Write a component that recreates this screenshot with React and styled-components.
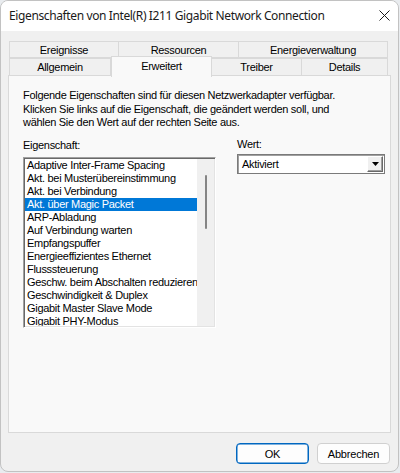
import React from "react";
import styled, { createGlobalStyle } from "styled-components";

const Global = createGlobalStyle`
  html, body { margin: 0; padding: 0; background: #e9ecef; }
  #root { width: 400px; height: 473px; }
`;

const Window = styled.div`
  width: 399px;
  height: 472px;
  box-sizing: border-box;
  background: #f0f0f0;
  border: 1px solid #c2c2c2;
  border-radius: 8px;
  overflow: hidden;
  display: flex;
  flex-direction: column;
  font-family: "Liberation Sans", Arial, sans-serif;
  font-size: 11px;
  letter-spacing: -0.3px;
  color: #000;
`;

const TitleBar = styled.div`
  height: 30px;
  flex: none;
  display: flex;
  align-items: center;
  justify-content: space-between;
  background: #ffffff;
  padding: 0 8px 1px 8px;
  box-sizing: border-box;
`;

const Title = styled.div`
  font-family: "Noto Sans", "Open Sans", sans-serif;
  font-size: 12px;
  letter-spacing: -0.38px;
  color: #1a1a1a;
`;

const CloseBtn = styled.div`
  width: 11px;
  height: 11px;
  display: flex;
  align-items: center;
  justify-content: center;
`;

const Body = styled.div`
  flex: 1;
  display: flex;
  flex-direction: column;
  padding: 10px 8px 0 7px;
`;

const TabRows = styled.div`
  display: flex;
  flex-direction: column;
  padding-left: 1px;
  position: relative;
  z-index: 2;
`;

const TabRow = styled.div`
  display: flex;
  height: ${(p) => p.$h}px;
  align-items: flex-end;
`;

const Tab = styled.div`
  box-sizing: border-box;
  width: ${(p) => p.$w}px;
  height: ${(p) => (p.$active ? p.$h + 3 : p.$h)}px;
  margin-bottom: ${(p) => (p.$active ? -1 : 0)}px;
  display: flex;
  justify-content: center;
  align-items: ${(p) => (p.$active ? "flex-start" : "center")};
  padding-top: ${(p) => (p.$active ? 3 : 0)}px;
  border: 1px solid #d9d9d9;
  border-bottom: ${(p) => (p.$active ? "none" : "1px solid #d9d9d9")};
  border-left-width: ${(p) => (p.$first || p.$active ? 1 : 0)}px;
  background: ${(p) => (p.$active ? "#f9f9f9" : "#f0f0f0")};
  position: relative;
  z-index: ${(p) => (p.$active ? 3 : 1)};
  white-space: nowrap;
`;

const Panel = styled.div`
  box-sizing: border-box;
  width: 383px;
  height: 358px;
  margin-top: -1px;
  border: 1px solid #d9d9d9;
  background: #f9f9f9;
  padding: 12px 0 0 14px;
  display: flex;
  flex-direction: column;
`;

const Desc = styled.div`
  line-height: 13.5px;
  padding-top: 1px;
`;

const Columns = styled.div`
  display: grid;
  grid-template-columns: 193px 148px;
  column-gap: 21px;
  margin-top: 9px;
`;

const Col = styled.div`
  display: flex;
  flex-direction: column;
`;

const Label = styled.div`
  line-height: 13px;
  margin-bottom: ${(p) => p.$gap}px;
  margin-top: ${(p) => p.$top || 0}px;
`;

const ListBox = styled.div`
  box-sizing: border-box;
  width: 193px;
  height: 171px;
  border-style: solid;
  border-width: 1px;
  border-color: #a0a0a0 #ffffff #ffffff #a0a0a0;
  box-shadow: inset 1px 1px 0 #696969, inset -1px -1px 0 #e3e3e3;
  background: #fff;
  padding: 1px;
  display: flex;
  overflow: hidden;
`;

const Items = styled.div`
  flex: 1;
  min-width: 0;
  overflow: hidden;
`;

const Item = styled.div`
  height: 13px;
  line-height: 13px;
  padding-left: 2px;
  white-space: nowrap;
  overflow: hidden;
  background: ${(p) => (p.$sel ? "#0078d7" : "transparent")};
  color: ${(p) => (p.$sel ? "#fff" : "#000")};
`;

const ScrollTrack = styled.div`
  width: 17px;
  flex: none;
  background: #f0f0f0;
  display: flex;
  justify-content: center;
  padding-top: 16px;
`;

const Thumb = styled.div`
  width: 2px;
  height: 54px;
  background: #858585;
  border-radius: 1px;
  margin-left: 1px;
`;

const Combo = styled.div`
  box-sizing: border-box;
  width: 148px;
  height: 20px;
  border: 1px solid #7a7a7a;
  box-shadow: inset 1px 1px 0 #a0a0a0;
  background: #fff;
  display: flex;
  align-items: stretch;
  padding: 1px;
`;

const ComboText = styled.div`
  flex: 1;
  padding-left: 3px;
  line-height: 17px;
`;

const ComboBtn = styled.div`
  box-sizing: border-box;
  width: 16px;
  background: #f0f0f0;
  border: 1px solid;
  border-color: #ffffff #696969 #696969 #ffffff;
  box-shadow: inset -1px -1px 0 #a0a0a0;
  display: flex;
  align-items: center;
  justify-content: center;
`;

const Footer = styled.div`
  display: flex;
  justify-content: flex-end;
  gap: 8px;
  padding: 10px 0 0 0;
`;

const Button = styled.button`
  box-sizing: border-box;
  width: 73px;
  height: 21px;
  font-family: "Liberation Sans", Arial, sans-serif;
  font-size: 11px;
  letter-spacing: -0.2px;
  color: #000;
  background: #fdfdfd;
  border: 1px solid ${(p) => (p.$primary ? "#0067c0" : "#d0d0d0")};
  box-shadow: ${(p) => (p.$primary ? "inset 0 0 0 0.5px #0067c0" : "none")};
  border-radius: 4px;
  padding: 0;
`;

const items = [
  "Adaptive Inter-Frame Spacing",
  "Akt. bei Musterübereinstimmung",
  "Akt. bei Verbindung",
  "Akt. über Magic Packet",
  "ARP-Abladung",
  "Auf Verbindung warten",
  "Empfangspuffer",
  "Energieeffizientes Ethernet",
  "Flusssteuerung",
  "Geschw. beim Abschalten reduzieren",
  "Geschwindigkeit & Duplex",
  "Gigabit Master Slave Mode",
  "Gigabit PHY-Modus",
];

export default function App() {
  return (
    <>
      <Global />
      <Window>
        <TitleBar>
          <Title>Eigenschaften von Intel(R) I211 Gigabit Network Connection</Title>
          <CloseBtn>
            <svg width="11" height="11" viewBox="0 0 11 11">
              <path d="M0.5 0.5 L10.5 10.5 M10.5 0.5 L0.5 10.5" stroke="#1a1a1a" strokeWidth="1" fill="none" />
            </svg>
          </CloseBtn>
        </TitleBar>
        <Body>
          <TabRows>
            <TabRow $h={17}>
              <Tab $w={110} $h={17} $first>Ereignisse</Tab>
              <Tab $w={120} $h={17}>Ressourcen</Tab>
              <Tab $w={149} $h={17}>Energieverwaltung</Tab>
            </TabRow>
            <TabRow $h={18}>
              <Tab $w={102} $h={18} $first>Allgemein</Tab>
              <Tab $w={101} $h={18} $active>Erweitert</Tab>
              <Tab $w={90} $h={18}>Treiber</Tab>
              <Tab $w={86} $h={18}>Details</Tab>
            </TabRow>
          </TabRows>
          <Panel>
            <Desc>
              Folgende Eigenschaften sind für diesen Netzwerkadapter verfügbar.
              <br />
              Klicken Sie links auf die Eigenschaft, die geändert werden soll, und
              <br />
              wählen Sie den Wert auf der rechten Seite aus.
            </Desc>
            <Columns>
              <Col>
                <Label $gap={5}>Eigenschaft:</Label>
                <ListBox>
                  <Items>
                    {items.map((t, i) => (
                      <Item key={t} $sel={i === 3}>{t}</Item>
                    ))}
                  </Items>
                  <ScrollTrack>
                    <Thumb />
                  </ScrollTrack>
                </ListBox>
              </Col>
              <Col>
                <Label $gap={3} $top={-1}>Wert:</Label>
                <Combo>
                  <ComboText>Aktiviert</ComboText>
                  <ComboBtn>
                    <svg width="7" height="4" viewBox="0 0 7 4">
                      <path d="M0 0 H7 L3.5 4 Z" fill="#000" />
                    </svg>
                  </ComboBtn>
                </Combo>
              </Col>
            </Columns>
          </Panel>
          <Footer>
            <Button $primary>OK</Button>
            <Button>Abbrechen</Button>
          </Footer>
        </Body>
      </Window>
    </>
  );
}
